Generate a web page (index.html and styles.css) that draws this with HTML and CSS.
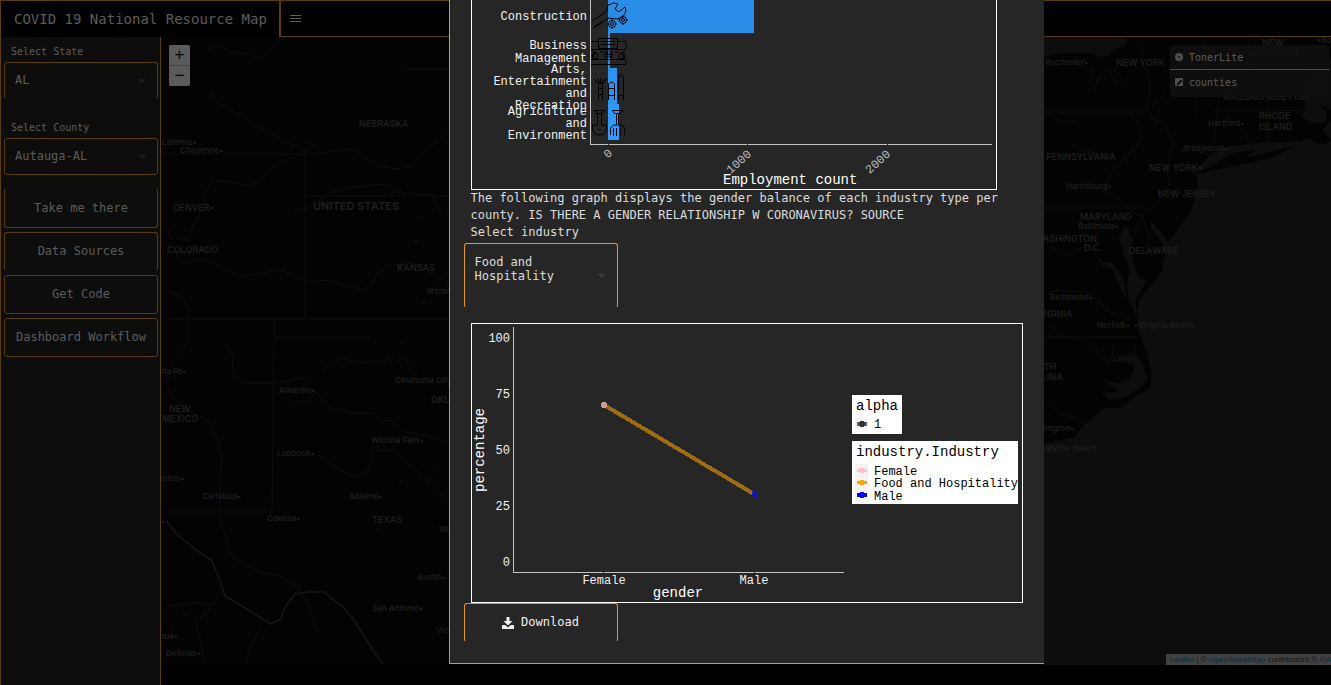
FILE: index.html
```html
<!DOCTYPE html>
<html lang="en">
<head>
<meta charset="utf-8">
<title>COVID 19 National Resource Map</title>
<link rel="stylesheet" href="styles.css">
</head>
<body>
<div class="app">
  <header class="topbar">
    <h1 class="brand">COVID 19 National Resource Map</h1>
    <nav class="topnav">
      <button class="menu-toggle" type="button" aria-label="Toggle navigation">
        <svg width="11" height="9" viewBox="0 0 11 9" shape-rendering="crispEdges"><path d="M0 1h11M0 4h11M0 7h11" transform="translate(0 .5)" stroke="currentColor" fill="none"/></svg>
      </button>
    </nav>
  </header>
  <div class="body">
    <aside class="sidebar">
      <label class="field-label" for="state">Select State</label>
      <select class="picker picker-open" id="state"><option>AL</option></select>
      <label class="field-label field-label-next" for="county">Select County</label>
      <select class="picker" id="county"><option>Autauga-AL</option></select>
      <div class="actions">
        <button class="action no-top" type="button">Take me there</button>
        <button class="action no-bottom" type="button">Data Sources</button>
        <button class="action" type="button">Get Code</button>
        <button class="action" type="button">Dashboard Workflow</button>
      </div>
    </aside>
    <main class="map">
      <svg class="tiles" viewBox="161 37 1170 628" preserveAspectRatio="xMinYMin slice" aria-label="Map">
        <rect x="161" y="37" width="1170" height="628" fill="#030303"/>
        <g fill="#0d0d0d">
          <path d="M1040 37H1128L1126 45L1116 50L1108 56L1100 57L1090 53L1060 53L1040 58z"/>
          <path d="M1331 60L1310 70L1303 95L1306 108L1301 116L1310 124L1326 122L1327 112L1320 105L1331 110V120L1322 130L1331 140L1318 144L1308 138L1290 142L1262 142L1240 145L1220 148L1208 157L1204 162L1192 172L1198 178L1197 192L1190 212L1176 232L1168 242L1160 231L1150 220L1151 228L1162 243L1165 256L1162 270L1150 287L1139 300L1137 311L1139 331L1146 350L1151 370V387L1136 396L1120 408L1105 408L1085 424L1074 438L1068 439L1055 441L1044 445V665H1331z"/>
          <path d="M1126 225L1119 238L1124 255L1130 270L1127 283L1129 302L1136 315L1136 298L1147 281L1138 276L1134 264L1130 250L1133 240z"/>
          <path d="M1112 360L1134 354L1142 362L1148 380L1140 388L1124 398L1110 400L1102 393L1118 392L1114 387L1102 380L1120 383L1130 378L1136 364L1113 361z"/>
          <path d="M1093 251l8 14 12 4 8 20 6 10-3-20-12-16-10-1z"/>
        </g>
        <path fill="#030303" d="M1193 174L1210 167L1232 153L1255 150L1246 158L1270 152L1296 145L1272 158L1225 168L1202 173zM1317 142l10-2v4zM1297 140l8-2-3 4z"/>
        <g fill="none" stroke="#0e0e0e">
          <path d="M402 69H461M161 154H305V319M305 196H449M161 319H449M275 319V338H370M274 338L272 512H161M1044 112H1145L1165 95M1044 208H1143L1151 210M1044 337H1137M1213 110H1258L1312 111"/>
          <path d="M208 50l12-5 10 7 20 2 7 5 10-5 8-9 10-8"/>
          <path d="M212 92l2 8 20 12 30 18 30 16 18 8 40-5 25 17 20 3 14-3 20-20 16-12"/>
          <path d="M305 153l-30 12-16 18-12 2-18-3-15-2-10 13-1 14-10 20-5 14-10-5-9-8M294 213l20-8 15-12 20-5 35-4 20 9 29 2 8 18"/>
          <path d="M168 230l9 26 9 8 14-5 15 5 16 8 10 4 15-2 24-4 12 4 18 8 14-2 41 10 20-24 28-3 38 21"/>
          <path d="M168 291l15 6 5 12v33l-14 20-8 22 5 10 16 16 20 10 10 20 5 15-3 60 6 20 5 20 15 10 15 7 20 4 20 12 9 20 9 24M227 343l5 10 1 20 9 10 35 0 30-6M324 369l18-10 27 4 5-3 10 2 5-6 8 6 6-5 16 22M289 406l20-6 7-8 14 15 24 6h20l8 8 10-1 10 11 30 6 18 8M318 455l15 11 20 11 16-6 4-20 20-1 18 16 14 13 22 19"/>
          <path d="M166 606l30-3 20 2M216 602l-20 20 2 10 3 10 3 20M264 624l-12 18-7 22"/>
          <path stroke="#171717" stroke-width="1.5" d="M166 521l12 14 14 12 20 14 8 20 5 15 20 12 26 16 10-5 4-12 10-13 14-2h15l20 16 10 12 20 32 9 12"/>
          <path d="M1137 42l6 10-3 10 8 10 2 20-4 15 6 12 13 6 8 20 10 7M1205 37l-3 28-7 20 2 30M1256 37l-5 20 2 20M1215 92l4 10-5 40M1240 127l14 20M1268 110v38M1130 111l8 12 4 17-20 20-15 18-2 10 24 20 14 10 8 22M1172 150l-6 20 4 12-15 24-12 8-8 20M1050 112l10 10 15-1M1072 144l8 6 16 3M1093 68l-3 15M1100 74l-6 18M1108 70l10 15M1114 68l8 14M1048 293l10-3 30 2 10 8 12 12 20 7M1050 325l8 10 15 2 20 6 8 15 10 5M1113 347l-1 12 20-6M1135 345v25M1047 400l12 13 20 6M1047 245l20 10 20-10 14-15 9-7"/>
        </g>
        <path d="M306 142l10 4M390 194l5-2M414 240l4 1M419 218h4M421 303l6 1M182 611l6 3M377 529l3-2M396 442l4-2M400 342l4-2M437 465l3 2M375 448l4-2M399 483l4-2" stroke="#121212" fill="none"/>
        <g class="place-region">
          <text x="359" y="127">NEBRASKA</text><text x="167" y="253">COLORADO</text><text x="397" y="271">KANSAS</text><text x="169" y="412">NEW</text><text x="162" y="422">MEXICO</text><text x="431" y="403">OKLAHOMA</text><text x="372" y="523">TEXAS</text>
          <text x="1116" y="66">NEW YORK</text><text x="1262" y="46">NEW</text><text x="1247" y="56">HAMPSHIRE</text><text x="1223" y="100">MASSACHUSETTS</text><text x="1259" y="119">RHODE</text><text x="1259" y="130">ISLAND</text><text x="1046" y="160">PENNSYLVANIA</text><text x="1149" y="171">NEW YORK▪</text><text x="1158" y="197">NEW JERSEY</text><text x="1080" y="220">MARYLAND</text><text x="1034" y="242">WASHINGTON,</text><text x="1084" y="251">D.C.</text><text x="1129" y="254">DELAWARE</text><text x="1032" y="317">VIRGINIA</text><text x="1024" y="370">NORTH</text><text x="1016" y="380">CAROLINA</text><text x="173" y="211">DENVER▪</text>
        </g>
        <text class="place-country" x="313" y="210">UNITED STATES</text>
        <g class="place-city">
          <text x="162" y="145">Laramie▪</text><text x="180" y="153">Cheyenne▪</text><text x="149" y="374">Santa Fe▪</text><text x="279" y="393">Amarillo▪</text><text x="395" y="383">Oklahoma City▪</text><text x="426" y="294">Wichita</text><text x="371" y="443">Wichita Falls▪</text><text x="277" y="456">Lubbock▪</text><text x="133" y="481">Alamogordo▪</text><text x="202" y="499">Carlsbad▪</text><text x="349" y="499">Abilene▪</text><text x="267" y="521">Odessa▪</text><text x="161" y="524">▪</text><text x="439" y="532">Waco</text><text x="417" y="580">Austin▪</text><text x="372" y="611">San Antonio▪</text><text x="436" y="633">Victoria</text><text x="132" y="639">Chihuahua▪</text><text x="166" y="656">Delicias▪</text>
          <text x="1045" y="65">Rochester▪</text><text x="1317" y="43">▪Boston</text><text x="1208" y="126">Hartford▪</text><text x="1183" y="151">Bridgeport▪</text><text x="1066" y="189">Harrisburg▪</text><text x="1078" y="229">Baltimore▪</text><text x="1050" y="300">Richmond▪</text><text x="1097" y="328">Norfolk▪</text><text x="1134" y="328">▪Virginia Beach</text><text x="1026" y="431">Wilmington▪</text><text x="1045" y="451">Myrtle Beach</text>
        </g>
      </svg>
      <div class="zoom">
        <button type="button" aria-label="Zoom in">+</button>
        <button type="button" aria-label="Zoom out">−</button>
      </div>
      <form class="layers">
        <label class="layer"><input type="radio" name="base" checked><span>TonerLite</span></label>
        <label class="layer layer-over"><input type="checkbox" checked><span>counties</span></label>
      </form>
      <p class="credit"><a href="#leaflet">Leaflet</a> | © <a href="#osm">OpenStreetMap</a> contributors © <a href="#carto">GARTO</a></p>
    </main>
  </div>
</div>

<div class="modal-layer">
  <section class="modal" role="dialog" aria-label="Industry">
    <svg class="chart chart-jobs" viewBox="471 -30 526 220" role="img" aria-label="Employment count by industry">
      <rect x="471.5" y="-29.500" width="525" height="219" fill="none" stroke="#fff"/>
      <g shape-rendering="crispEdges">
        <rect x="608" y="-3" width="146" height="36" fill="#298ce6"/>
        <rect x="608" y="33" width="2" height="35" fill="#298ce6"/>
        <rect x="608" y="68" width="9" height="36" fill="#2e92f0"/>
        <rect x="608" y="104" width="11" height="36" fill="#3399ff"/>
        <path d="M590.500 -29V144.500H992" fill="none" stroke="#c4c4c4"/>
        <path d="M608.500 144v2M747.500 144v2M887.500 144v2" stroke="#262626"/>
      </g>
      <g fill="none" stroke="#000">
        <path d="M592 21l14-9 2-7 6-2 4 1-3 5 4 3 6-5 1 4-3 6-7 2-7-1-16 10M594 27l9-6"/>
        <circle cx="612" cy="24" r="3.500"/><circle cx="612" cy="24" r="1.500"/><path d="M612 19v2M612 27v2M607 24h2M615 24h2"/>
        <circle cx="623" cy="20" r="3.500"/><circle cx="623" cy="20" r="1.500"/><path d="M623 15v2M623 23v2M618 20h2M626 20h2"/>
        <path d="M598.500 38.500h19v10h-19zM601 41.500h14M601 44.500h14M591 41.500h7M618 41.500h8v7M591 49.500h35M591 64.500h35v-5h-35M605 51v9M612 51v9M606 54h5v3h-5"/>
        <path d="M592 51l4 2-3 3 3 3M625 51l-4 2 3 3-3 3M600 52h3M615 52h4"/>
        <circle cx="595" cy="56" r="3"/><circle cx="622" cy="56" r="3"/><circle cx="608.500" cy="53" r="2"/>
        <path d="M598.500 100V83.500h4V100M594 79l5 5M597 78l3 5M600.500 78v5M604 79l-2 4M607 79l-5 5M598 88.500h5M598 94.500h5M608.500 100V84q3-4 6 0v16M608 88.500h6M608 95.500h6M618.500 100V78q2-8 5 0v22M618 95.500h5"/>
        <path d="M594.500 110.500h10l-2 3h-6zM597.500 114v11h-5q-1 10 7 10 8 0 7-10h-5v-11M598 129.500h3M612.500 110.500h10l-2 3h-6zM616.500 114v10M618.500 114v10M610.500 135v-7l3-3h8l3 3v7M613.500 136v-8M616.500 136v-8M620.500 136v-8"/>
      </g>
      <g class="tick" text-anchor="end">
        <text x="587" y="20">Construction</text>
        <text x="587" y="49">Business</text><text x="587" y="62">Management</text>
        <text x="587" y="73">Arts,</text><text x="587" y="85">Entertainment</text><text x="587" y="97">and</text><text x="587" y="109">Recreation</text>
        <text x="587" y="115">Agriculture</text><text x="587" y="127">and</text><text x="587" y="139">Environment</text>
      </g>
      <g class="tick tick-dim" text-anchor="end">
        <text transform="translate(613 154) rotate(-42)">0</text>
        <text transform="translate(752 155) rotate(-42)">1000</text>
        <text transform="translate(891 155) rotate(-42)">2000</text>
      </g>
      <text class="axis-title" x="723" y="184">Employment count</text>
    </svg>
    <p class="copy">The following graph displays the gender balance of each industry type per county. IS THERE A GENDER RELATIONSHIP W CORONAVIRUS? SOURCE</p>
    <label class="copy" for="industry">Select industry</label>
    <select class="picker picker-open picker-tall" id="industry"><option>Food and Hospitality</option></select>
    <svg class="chart chart-gender" viewBox="471 323 552 280" role="img" aria-label="Percentage by gender">
      <rect x="471.500" y="323.500" width="551" height="279" fill="none" stroke="#fff"/>
      <g shape-rendering="crispEdges">
        <path d="M513.500 327V572.500H844" fill="none" stroke="#c4c4c4"/>
        <path d="M603.500 572v2M754.500 572v2" stroke="#262626"/>
        <path d="M604 405L754 494" stroke="#a06c12" stroke-width="4"/>
        <circle cx="604" cy="405" r="3" fill="#cf9d98"/>
        <circle cx="755" cy="494" r="3" fill="#1212bd"/>
      </g>
      <g class="tick" text-anchor="end">
        <text x="510" y="342">100</text><text x="510" y="398">75</text><text x="510" y="454">50</text><text x="510" y="510">25</text><text x="510" y="566">0</text>
      </g>
      <g class="tick" text-anchor="middle"><text x="604" y="584">Female</text><text x="754" y="584">Male</text></g>
      <text class="axis-title" text-anchor="middle" x="678" y="597">gender</text>
      <text class="axis-title" text-anchor="middle" transform="translate(484 450) rotate(-90)">percentage</text>
      <rect x="852" y="395" width="50" height="39" fill="#fff"/>
      <rect x="855" y="418" width="13" height="11" fill="#f2f2f2"/>
      <rect x="852" y="441" width="166" height="63" fill="#fff"/>
      <rect x="855" y="464" width="13" height="36" fill="#f2f2f2"/>
      <g shape-rendering="crispEdges">
        <path fill="#666" d="M857 422h10v4h-10z"/><circle cx="862" cy="424" r="3" fill="#333"/>
        <path fill="#ffc0cb" d="M857 469h10v3h-10z"/><circle cx="862" cy="470.500" r="3" fill="#ffc0cb"/>
        <path fill="#ffa500" d="M857 481h10v3h-10z"/><circle cx="862" cy="482.500" r="3" fill="#ffa500"/>
        <path fill="#00f" d="M857 493h10v4h-10z"/><circle cx="862" cy="495" r="3" fill="#00f"/>
      </g>
      <text class="legend-title" x="856" y="410">alpha</text>
      <text class="legend-title" x="856" y="456">industry.Industry</text>
      <g class="legend-item"><text x="874" y="428">1</text><text x="874" y="475">Female</text><text x="874" y="487">Food and Hospitality</text><text x="874" y="500">Male</text></g>
    </svg>
    <button class="download" type="button">
      <svg width="12" height="12" viewBox="0 0 12 12" fill="currentColor"><path d="M4.500 0h3v4h3L6 8.500 1.500 4h3zM0 8h3.200L6 10.500 8.800 8H12v4H0z"/></svg>
      Download
    </button>
  </section>
</div>
</body>
</html>
```

FILE: styles.css
```css
* { box-sizing: border-box; }

body {
  margin: 0;
  background: #000;
  color: #5c5c5c;
  font: 12px/17px "DejaVu Sans Mono", monospace;
  overflow: hidden;
}

button, select, input { font: inherit; color: inherit; }

.app { display: flex; flex-direction: column; min-height: 100vh; }

.topbar { display: flex; height: 37px; border-top: 1px solid #5a3c0b; }

.brand {
  flex: 0 0 281px;
  margin: 0;
  padding: 0 0 0 13px;
  border: solid #5a3c0b;
  border-width: 0 2px 0 1px;
  font-size: 14px;
  font-weight: 400;
  line-height: 36px;
  white-space: nowrap;
}

.topnav { flex: 1; border-bottom: 1px solid #5a3c0b; }

.menu-toggle {
  display: block;
  margin: 0;
  padding: 13px 9px;
  border: 0;
  background: none;
  line-height: 0;
}

.body { flex: 1; display: flex; }

.sidebar {
  flex: 0 0 161px;
  padding: 6px 2px 0 3px;
  border: solid #5a3c0b;
  border-width: 0 1px;
  background: #0d0d0d;
}

.field-label { display: block; padding: 0 7px 2px; font-size: 10px; }
.field-label-next { margin-top: 20px; }

.picker {
  --arrow: #1b1b1b;
  display: block;
  width: 154px;
  height: 37px;
  padding: 0 10px;
  border: 1px solid #5a3c0b;
  border-radius: 3px;
  appearance: none;
  background:
    linear-gradient(45deg, transparent 50%, var(--arrow) 50%) right 15px center / 4px 4px no-repeat,
    linear-gradient(-45deg, transparent 50%, var(--arrow) 50%) right 11px center / 4px 4px no-repeat;
}
.picker-open { border-bottom-color: transparent; }

.actions { display: flex; flex-direction: column; gap: 4px; margin-top: 13px; }

.action {
  height: 40px;
  width: 154px;
  padding: 0;
  border: 1px solid #5a3c0b;
  border-radius: 3px;
  background: none;
}
.action + .action { height: 39px; }
.no-top { border-top-color: transparent; }
.no-bottom { border-bottom-color: transparent; }

.map { position: relative; flex: 1; overflow: hidden; }

.tiles { display: block; width: 100%; min-width: 1170px; height: 628px; }
.tiles text { font-family: Inter, sans-serif; fill: #1e1e1e; }
.place-region { font-size: 9px; font-weight: 600; }
.place-country { font-size: 11px; font-weight: 700; }
.place-city { font-size: 8px; font-weight: 600; }

.zoom { position: absolute; top: 8px; left: 8px; display: grid; gap: 1px; background: #454545; border-radius: 2px; overflow: hidden; }
.zoom button {
  width: 21px;
  height: 20px;
  padding: 0;
  border: 0;
  background: #5b5b5b;
  color: #000;
  font: 17px/20px "Liberation Sans", sans-serif;
}

.layers {
  position: absolute;
  top: 8px;
  right: 2px;
  width: 159px;
  border-radius: 3px;
  background: rgba(16, 16, 16, .85);
  font-size: 10px;
}
.layer { display: flex; align-items: center; gap: 6px; height: 24px; padding: 0 5px; }
.layer-over { height: 28px; padding-bottom: 3px; border-top: 1px solid #4a4a4a; }
.layer input { appearance: none; width: 8px; height: 8px; margin: 0; background: #4e4e4e; border-radius: 1px; }
.layer input[type="radio"] { border: 3px solid #4e4e4e; border-radius: 50%; background: #111; }
.layer input[type="checkbox"] { background: linear-gradient(135deg, transparent 35%, #111 35% 65%, transparent 65%) center / 5px 5px no-repeat #4e4e4e; }

.credit {
  position: absolute;
  top: 617px;
  right: 0;
  width: 165px;
  height: 11px;
  margin: 0;
  padding-left: 4px;
  overflow: hidden;
  background: #414141;
  color: #121212;
  font: 8px/11px "Liberation Sans", sans-serif;
  white-space: nowrap;
}
.credit a { color: #002f46; text-decoration: none; }

.modal-layer {
  position: fixed;
  inset: 0;
  display: flex;
  align-items: flex-end;
  justify-content: center;
  padding: 0 0 21px 161px;
}

.modal {
  flex: 0 1 595px;
  padding: 0 14px 21px;
  border: solid #e0962a;
  border-width: 0 0 1px 1px;
  background: #262626;
  color: #dcdcdc;
}

.chart { display: block; margin-left: 7px; }
.chart-jobs { width: 526px; max-width: 98%; }
.chart-gender { width: 552px; max-width: 98%; margin-top: 15px; }
.chart text { font-family: "Liberation Mono", monospace; }
.tick { font-size: 12px; fill: #f2f2f2; }
.tick-dim { fill: #b9bdc4; }
.axis-title { font-size: 14px; fill: #fff; }
.legend-title { font-size: 14px; fill: #000; }
.legend-item { font-size: 12px; fill: #000; }

.copy { display: block; margin: 0 28px 0 7px; }

.modal .picker, .download { border-color: #e0962a; }
.modal .picker-open, .download { border-bottom-color: transparent; }

.modal .picker-tall {
  --arrow: #3c3c3c;
  height: 65px;
  margin-top: 2px;
  padding: 0 40px 14px 10px;
  line-height: 14px;
  white-space: normal;
  text-wrap: wrap;
}

.download {
  display: flex;
  align-items: center;
  justify-content: center;
  gap: 7px;
  width: 154px;
  height: 39px;
  padding: 0;
  border: 1px solid #e0962a;
  border-bottom-color: transparent;
  border-radius: 3px;
  background: none;
  color: #f0f0f0;
}
```
